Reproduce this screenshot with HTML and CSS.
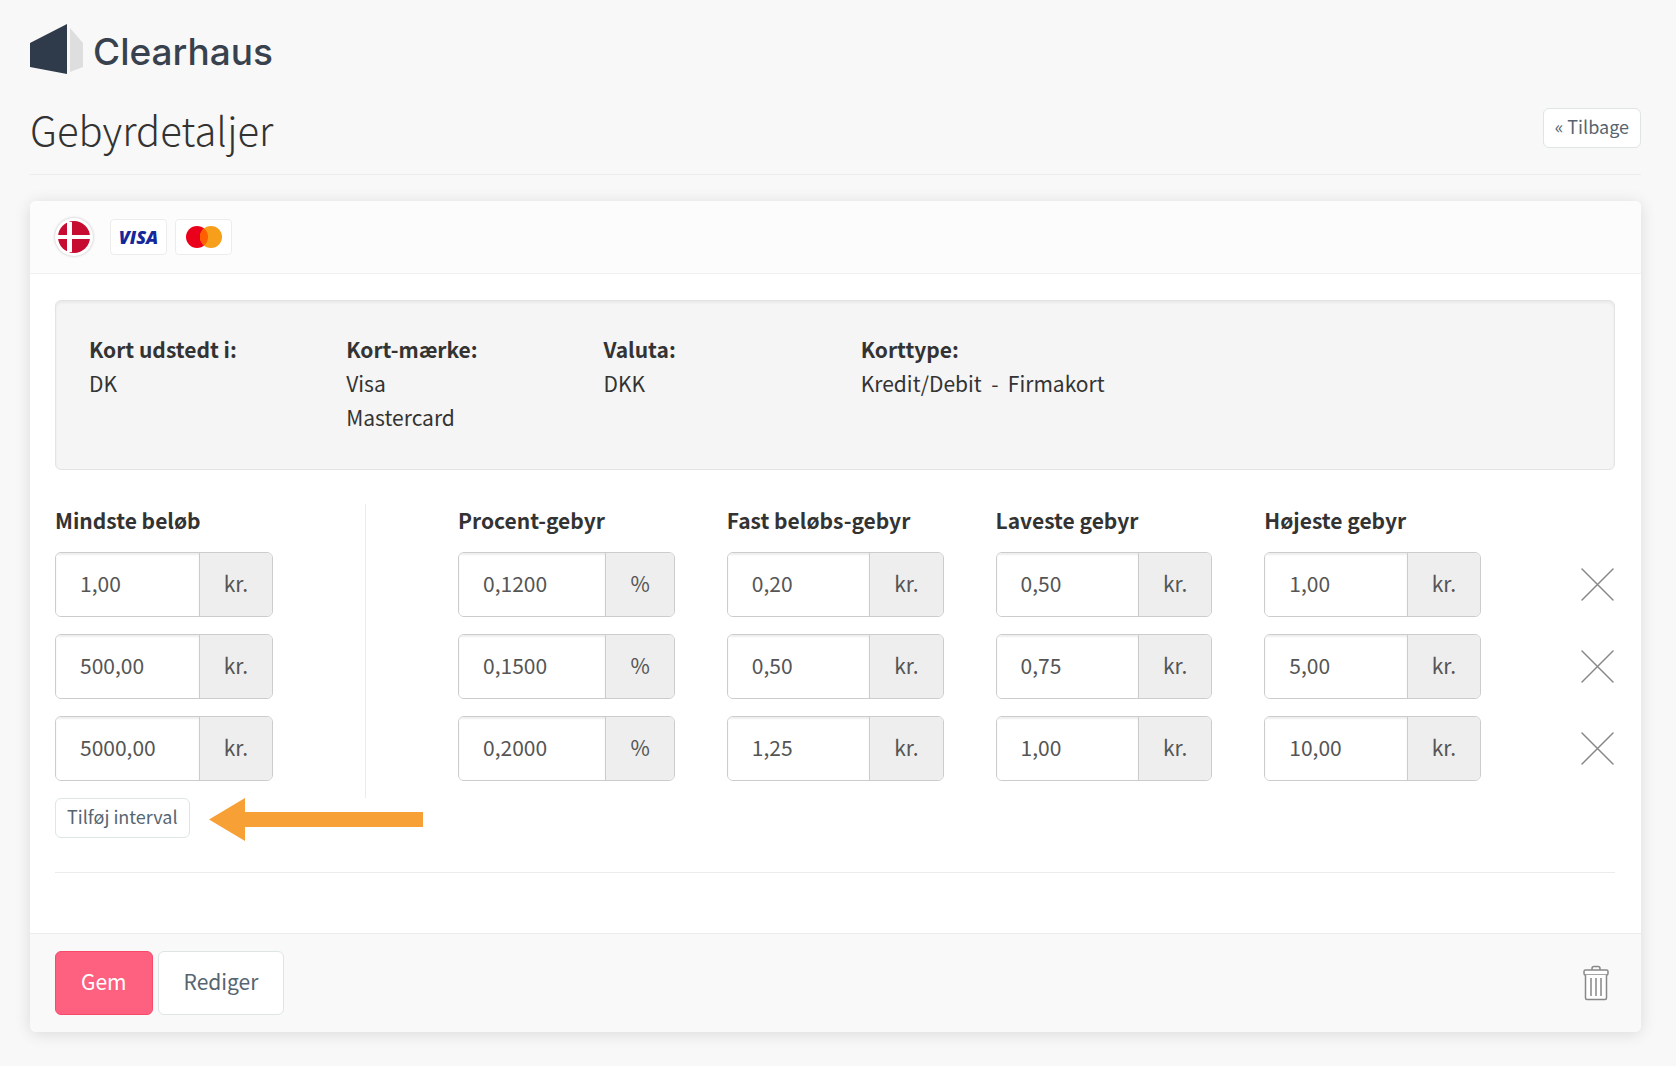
FILE: index.html
```html
<!DOCTYPE html>
<html lang="da">
<head>
<meta charset="utf-8">
<meta name="viewport" content="width=device-width, initial-scale=1">
<title>Gebyrdetaljer</title>
<link rel="stylesheet" href="styles.css">
</head>
<body>
<svg class="sprite" aria-hidden="true">
  <symbol id="icon-cross" viewBox="0 0 33 33">
    <path d="M1 1 32 32M32 1 1 32" fill="none" stroke="#888" stroke-width="1.5" stroke-linecap="round"/>
  </symbol>
</svg>

<header class="brand">
  <svg class="brand-mark" viewBox="0 0 53 50" aria-hidden="true">
    <path d="M0 19 37 0V50L0 43Z" fill="#2f3a4a"/>
    <path d="M40 4 53 19V43L40 48Z" fill="#dedede"/>
  </svg>
  <span class="brand-name">Clearhaus</span>
</header>

<div class="page-head">
  <h1 class="page-title">Gebyrdetaljer</h1>
  <a class="btn btn-small" href="#">« Tilbage</a>
</div>

<main class="card">
  <div class="card-head">
    <span class="flag">
      <svg viewBox="0 0 32 32" role="img" aria-label="Danmark">
        <circle cx="16" cy="16" r="16" fill="#c60c30"/>
        <path d="M9 1h5v30H9zM0 14h32v4H0z" fill="#fff"/>
      </svg>
    </span>
    <span class="scheme scheme-visa">VISA</span>
    <span class="scheme">
      <svg width="36" height="22" viewBox="0 0 36 22" role="img" aria-label="Mastercard">
        <circle cx="11" cy="11" r="11" fill="#eb001b"/>
        <circle cx="25" cy="11" r="11" fill="#f79e1b"/>
        <path d="M18 2.500a11 11 0 0 1 0 17a11 11 0 0 1 0-17Z" fill="#ff5f00"/>
      </svg>
    </span>
  </div>

  <div class="card-body">
    <dl class="well">
      <div><dt>Kort udstedt i:</dt><dd>DK</dd></div>
      <div><dt>Kort-mærke:</dt><dd>Visa</dd><dd>Mastercard</dd></div>
      <div><dt>Valuta:</dt><dd>DKK</dd></div>
      <div><dt>Korttype:</dt><dd>Kredit/Debit &nbsp;-&nbsp; Firmakort</dd></div>
    </dl>

    <form class="fees" id="fees">
      <div class="minimums">
        <label class="heading" id="h-min" for="min-1">Mindste beløb</label>
        <div class="field"><input id="min-1" aria-labelledby="h-min" value="1,00"><span class="unit">kr.</span></div>
        <div class="field"><input aria-labelledby="h-min" value="500,00"><span class="unit">kr.</span></div>
        <div class="field"><input aria-labelledby="h-min" value="5000,00"><span class="unit">kr.</span></div>
      </div>
      <div class="rates">
        <div class="rate-row">
          <label class="heading" id="h-pct" for="pct-1">Procent-gebyr</label>
          <label class="heading" id="h-fix" for="fix-1">Fast beløbs-gebyr</label>
          <label class="heading" id="h-low" for="low-1">Laveste gebyr</label>
          <label class="heading" id="h-high" for="high-1">Højeste gebyr</label>
        </div>
        <div class="rate-row">
          <div class="field"><input id="pct-1" aria-labelledby="h-pct" value="0,1200"><span class="unit">%</span></div>
          <div class="field"><input id="fix-1" aria-labelledby="h-fix" value="0,20"><span class="unit">kr.</span></div>
          <div class="field"><input id="low-1" aria-labelledby="h-low" value="0,50"><span class="unit">kr.</span></div>
          <div class="field"><input id="high-1" aria-labelledby="h-high" value="1,00"><span class="unit">kr.</span></div>
          <button class="icon-btn" type="button" aria-label="Fjern interval"><svg width="33" height="33"><use href="#icon-cross"/></svg></button>
        </div>
        <div class="rate-row">
          <div class="field"><input aria-labelledby="h-pct" value="0,1500"><span class="unit">%</span></div>
          <div class="field"><input aria-labelledby="h-fix" value="0,50"><span class="unit">kr.</span></div>
          <div class="field"><input aria-labelledby="h-low" value="0,75"><span class="unit">kr.</span></div>
          <div class="field"><input aria-labelledby="h-high" value="5,00"><span class="unit">kr.</span></div>
          <button class="icon-btn" type="button" aria-label="Fjern interval"><svg width="33" height="33"><use href="#icon-cross"/></svg></button>
        </div>
        <div class="rate-row">
          <div class="field"><input aria-labelledby="h-pct" value="0,2000"><span class="unit">%</span></div>
          <div class="field"><input aria-labelledby="h-fix" value="1,25"><span class="unit">kr.</span></div>
          <div class="field"><input aria-labelledby="h-low" value="1,00"><span class="unit">kr.</span></div>
          <div class="field"><input aria-labelledby="h-high" value="10,00"><span class="unit">kr.</span></div>
          <button class="icon-btn" type="button" aria-label="Fjern interval"><svg width="33" height="33"><use href="#icon-cross"/></svg></button>
        </div>
      </div>
    </form>

    <div class="add-row">
      <button class="btn btn-small" type="button">Tilføj interval</button>
      <svg width="214" height="43" viewBox="0 0 214 43" aria-hidden="true">
        <path d="M0 21.500 36 0V14H214V29H36V43Z" fill="#f7a036"/>
      </svg>
    </div>
  </div>

  <footer class="card-foot">
    <button class="btn btn-primary" type="submit" form="fees">Gem</button>
    <button class="btn" type="button">Rediger</button>
    <button class="icon-btn delete" type="button" aria-label="Slet">
      <svg width="26" height="36" viewBox="0 0 26 36" fill="none" stroke="#888" stroke-width="1.500">
        <path d="M9 5V3.500Q9 1.500 11 1.500H15Q17 1.500 17 3.500V5"/>
        <rect x="1" y="5" width="24" height="5" rx="1.500" fill="#fff"/>
        <path d="M2.500 10V33Q2.500 34.500 4 34.500H22Q23.500 34.500 23.500 33V10" fill="#fff"/>
        <path d="M8 13V31M13 13V31M18 13V31"/>
      </svg>
    </button>
  </footer>
</main>
</body>
</html>
```

FILE: styles.css
```css
* {
  box-sizing: border-box;
}

body {
  margin: 0;
  padding: 24px 35px 32px 30px;
  background: #f8f8f8;
  color: #333;
  font: 21px/34px "Noto Sans CJK JP", "Noto Sans", sans-serif;
}

.sprite {
  display: none;
}

.brand {
  display: flex;
  gap: 10px;
  height: 50px;
}

.brand-mark {
  width: 53px;
  height: 50px;
}

.brand-name {
  color: #38424e;
  font: 500 37px/56px Inter, sans-serif;
}

.page-head {
  display: flex;
  align-items: flex-start;
  justify-content: space-between;
  margin-bottom: 26px;
  padding: 34px 0 24px;
  border-bottom: 1px solid #ececec;
}

.page-title {
  margin: 0;
  font-size: 40px;
  font-weight: 300;
  line-height: 42px;
}

.btn {
  padding: 12px 25px 16px;
  border: 1px solid #dde5e5;
  border-radius: 6px;
  background: #fff;
  color: #566570;
  font: inherit;
  text-decoration: none;
  cursor: pointer;
}

.btn-small {
  padding: 2px 11px 6px;
  font-size: 18px;
  line-height: 30px;
}

.btn-primary {
  border-color: #f94a6c;
  background: #fd617f;
  color: #fff;
}

.card {
  overflow: hidden;
  border-radius: 6px;
  background: #fff;
  box-shadow: 0 2px 16px rgba(0, 0, 0, .12);
}

.card-head {
  display: flex;
  align-items: center;
  gap: 8px;
  height: 73px;
  padding: 0 25px;
  border-bottom: 1px solid #f0f0f0;
  background: #fcfcfc;
}

.flag {
  display: flex;
  width: 38px;
  height: 38px;
  margin-right: 9px;
  padding: 3px;
  border-radius: 50%;
  background: #fff;
  box-shadow: 0 0 3px rgba(0, 0, 0, .25);
}

.scheme {
  display: flex;
  align-items: center;
  justify-content: center;
  width: 57px;
  height: 36px;
  border: 1px solid #ececec;
  border-radius: 4px;
  background: #fff;
}

.scheme-visa {
  color: #14279b;
  font: italic 800 18px/34px "Open Sans", sans-serif;
}

.card-body {
  padding: 26px 26px 60px 25px;
}

.well {
  display: grid;
  grid-template-columns: 10fr 10fr 10fr 28fr;
  min-height: 170px;
  margin: 0 0 34px;
  padding: 31px 33px;
  border: 1px solid #e3e3e3;
  border-radius: 6px;
  background: #f5f5f5;
  box-shadow: inset 0 2px 3px rgba(0, 0, 0, .05);
}

.well dt,
.heading {
  font-weight: 700;
}

.well dd {
  margin: 0;
}

.fees {
  display: flex;
}

.minimums {
  display: flex;
  flex: none;
  flex-direction: column;
  width: calc(20% - 1px);
  padding-right: 92px;
  border-right: 1px solid #ececec;
}

.rates {
  flex: 1;
  padding-left: 92px;
}

.rate-row {
  display: grid;
  grid-template-columns: repeat(4, 1fr) 82px;
  align-items: start;
  gap: 52px;
}

.heading {
  height: 48px;
  line-height: 32px;
}

.field {
  display: flex;
  height: 65px;
  margin-bottom: 17px;
  overflow: hidden;
  border: 1px solid #ccc;
  border-radius: 6px;
}

.field input {
  flex: 1;
  min-width: 0;
  padding: 0 0 4px 24px;
  border: 0;
  background: #fff;
  box-shadow: inset 0 2px 2px rgba(0, 0, 0, .07);
  color: #555;
  font: inherit;
}

.unit {
  padding: 0 24px;
  border-left: 1px solid #ccc;
  background: #eee;
  color: #555;
  line-height: 60px;
}

.icon-btn {
  display: flex;
  align-items: center;
  justify-content: flex-end;
  height: 64px;
  padding: 0 1px 0 0;
  border: 0;
  background: none;
  cursor: pointer;
}

.add-row {
  display: flex;
  align-items: flex-start;
  gap: 19px;
  padding-bottom: 31px;
  border-bottom: 1px solid #ececec;
}

.card-foot {
  display: flex;
  align-items: center;
  gap: 5px;
  padding: 17px 31px 17px 25px;
  border-top: 1px solid #ececec;
  background: #f9f9f9;
}

.delete {
  margin-left: auto;
}
```
